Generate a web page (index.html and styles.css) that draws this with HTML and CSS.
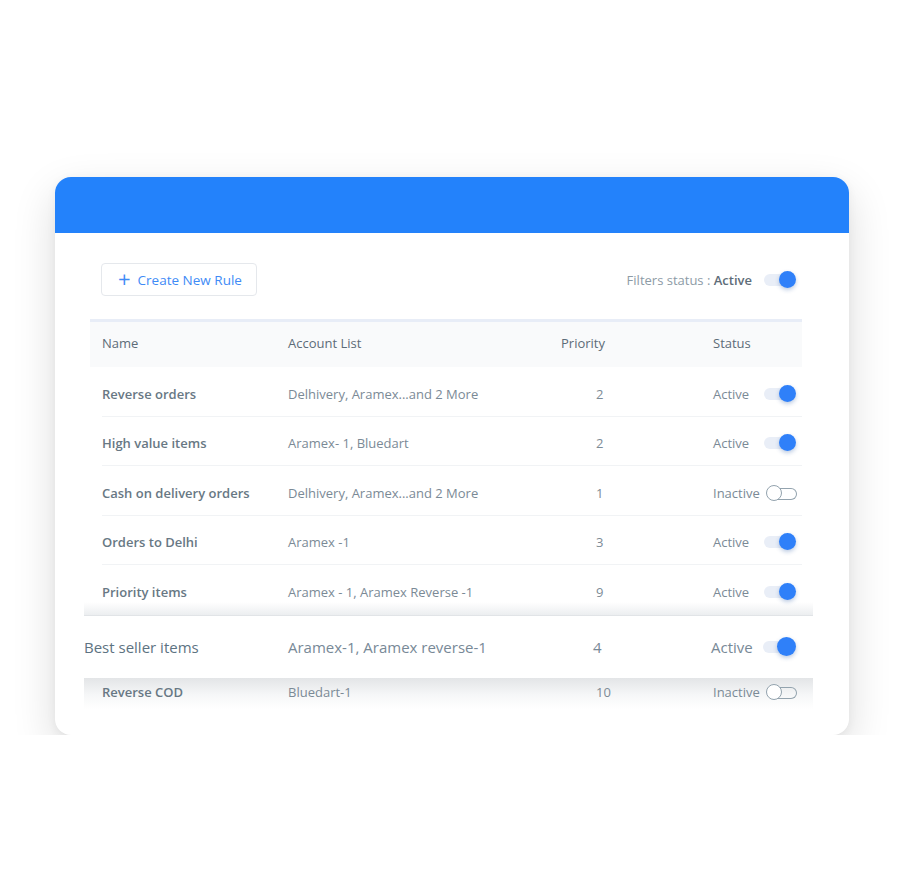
FILE: index.html
```html
<!DOCTYPE html>
<html>
<head>
<meta charset="utf-8">
<link rel="stylesheet" href="styles.css">
</head>
<body>
<div class="page">
  <div class="card">
    <div class="card-head"></div>
    <div class="toolbar">
      <button class="btn-create"><span class="plus">+</span>Create New Rule</button>
      <div class="filter">
        <span class="filter-label">Filters status : <b>Active</b></span>
        <span class="tg on"><span class="knob"></span></span>
      </div>
    </div>
    <div class="table">
      <div class="row head">
        <div class="c1">Name</div>
        <div class="c2">Account List</div>
        <div class="c3">Priority</div>
        <div class="c4">Status</div>
      </div>
      <div class="row body first">
        <div class="c1 name">Reverse orders</div>
        <div class="c2">Delhivery, Aramex...and 2 More</div>
        <div class="c3 num">2</div>
        <div class="c4 st"><span>Active</span><span class="tg on"><span class="knob"></span></span></div>
      </div>
      <div class="row body">
        <div class="c1 name">High value items</div>
        <div class="c2">Aramex- 1, Bluedart</div>
        <div class="c3 num">2</div>
        <div class="c4 st"><span>Active</span><span class="tg on"><span class="knob"></span></span></div>
      </div>
      <div class="row body">
        <div class="c1 name">Cash on delivery orders</div>
        <div class="c2">Delhivery, Aramex...and 2 More</div>
        <div class="c3 num">1</div>
        <div class="c4 st"><span>Inactive</span><span class="tg off"><span class="knob"></span></span></div>
      </div>
      <div class="row body">
        <div class="c1 name">Orders to Delhi</div>
        <div class="c2">Aramex -1</div>
        <div class="c3 num">3</div>
        <div class="c4 st"><span>Active</span><span class="tg on"><span class="knob"></span></span></div>
      </div>
      <div class="row body last">
        <div class="c1 name">Priority items</div>
        <div class="c2">Aramex - 1, Aramex Reverse -1</div>
        <div class="c3 num">9</div>
        <div class="c4 st"><span>Active</span><span class="tg on"><span class="knob"></span></span></div>
      </div>
    </div>
    <div class="lifted">
      <div class="fade-top"></div>
      <div class="row big">
        <div class="b1">Best seller items</div>
        <div class="b2">Aramex-1, Aramex reverse-1</div>
        <div class="b3">4</div>
        <div class="b4 st"><span>Active</span><span class="tg on lg"><span class="knob"></span></span></div>
      </div>
      <div class="row under">
        <div class="u1 name">Reverse COD</div>
        <div class="c2">Bluedart-1</div>
        <div class="c3 num u3">10</div>
        <div class="c4 st"><span>Inactive</span><span class="tg off"><span class="knob"></span></span></div>
      </div>
    </div>
  </div>
</div>
</body>
</html>
```

FILE: styles.css
```css
* { box-sizing: border-box; }
html, body { margin: 0; padding: 0; background: #fff; }
body { font-family: "Open Sans", "Noto Sans", sans-serif; color: #6f7f8b; }

.page { padding: 177px 0 0 55px; }

.card {
  width: 794px;
  height: 558px;
  background: #fff;
  border-radius: 16px;
  overflow: hidden;
  box-shadow: 0 16px 44px rgba(0, 0, 0, 0.14), 0 2px 10px rgba(0, 0, 0, 0.05);
}
.card-head { height: 56px; background: #2382fb; }

.toolbar {
  display: flex;
  justify-content: space-between;
  align-items: center;
  padding: 30px 53px 0 46px;
  height: 63px;
}
.btn-create {
  height: 33px;
  width: 156px;
  background: #fff;
  border: 1px solid #e5e8ec;
  border-radius: 4px;
  font-family: inherit;
  font-size: 13.5px;
  font-weight: 500;
  color: #3f8bf6;
  display: flex;
  align-items: center;
  padding: 0 0 0 16px;
  gap: 7px;
}
.plus { font-size: 22px; font-weight: 400; line-height: 1; margin-top: -3px; }
.filter { display: flex; align-items: center; gap: 12px; }
.filter-label { font-size: 13px; color: #8d9ba6; }
.filter-label b { font-weight: 600; color: #5e6d79; }

/* toggles */
.tg { position: relative; display: inline-block; width: 32px; height: 18px; flex: none; }
.tg.on::before {
  content: "";
  position: absolute;
  left: 0; top: 3px;
  width: 26px; height: 12px;
  border-radius: 6px;
  background: #e9eef7;
}
.tg.on .knob {
  position: absolute;
  right: 0; top: 0;
  width: 17px; height: 17px;
  border-radius: 50%;
  background: #2f80f9;
  box-shadow: 0 2px 4px rgba(30, 80, 160, 0.3);
}
.tg.off { width: 30px; }
.tg.off::before {
  content: "";
  position: absolute;
  left: 8px; top: 4px;
  width: 22px; height: 10px;
  border: 1.4px solid #93a3ae;
  border-left: none;
  border-radius: 0 6px 6px 0;
}
.tg.off .knob {
  position: absolute;
  left: 0; top: 1px;
  width: 16px; height: 16px;
  border-radius: 50%;
  border: 1.4px solid #93a3ae;
  background: #fff;
}
.tg.lg { width: 33px; height: 19px; }
.tg.lg .knob { width: 19px; height: 19px; }
.tg.lg::before { top: 4px; width: 28px; }

/* table */
.table { margin: 23px 47px 0 35px; }
.row {
  display: grid;
  grid-template-columns: 186px 273px 152px 101px;
  align-items: center;
}
.row > div { padding-left: 12px; white-space: nowrap; }
.row.head {
  height: 48px;
  background: #f9fafb;
  border-top: 3px solid #e8edf7;
  font-size: 13px;
  color: #5d6c78;
  padding-bottom: 3px;
}
.row.body {
  height: 49.5px;
  padding-top: 5px;
  font-size: 13px;
  color: #7b8a96;
  border-bottom: 1px solid #f1f3f5;
  margin-left: 12px;
  grid-template-columns: 174px 273px 152px 101px;
}
.row.body > .c1 { padding-left: 0; }
.row.body.last { border-bottom: none; }
.name { font-weight: 600; color: #687884; }
.num { padding-left: 47px !important; color: #7d8b96; }
.st { display: flex; justify-content: space-between; align-items: center; padding-right: 6px; }

.lifted { margin: 0 36px 0 29px; }
.fade-top {
  height: 13px;
  margin-top: -13px;
  background: linear-gradient(to bottom, rgba(236, 238, 240, 0), #eceef0);
  position: relative;
}
.row.big {
  height: 63px;
  background: #fff;
  grid-template-columns: 204px 305px 118px 102px;
  font-size: 15px;
  color: #788997;
  border-top: 1px solid #e1e4e7;
}
.row.big > div { padding-left: 0; }
.b1 { color: #5d7382; font-weight: 500; }
.row.big .b4 { padding-right: 17px; }
.row.under {
  height: 31px;
  padding-bottom: 3px;
  font-size: 13px;
  color: #7b8a96;
  background: linear-gradient(to bottom, #e3e5e7, #f6f7f8 55%, #fff 100%);
  grid-template-columns: 192px 273px 152px 112px;
}
.row.under > .u1 { padding-left: 18px; }
.row.under > .c2 { padding-left: 12px; }
.u3 { padding-left: 47px !important; }
.row.under .st { padding-right: 17px; }
```
